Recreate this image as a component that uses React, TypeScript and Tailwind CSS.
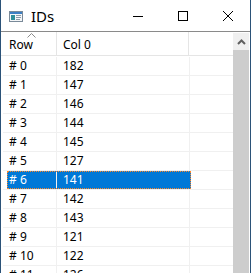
import React from "react";

const rows = [
  { id: 0, value: "182" },
  { id: 1, value: "147" },
  { id: 2, value: "146" },
  { id: 3, value: "144" },
  { id: 4, value: "145" },
  { id: 5, value: "127" },
  { id: 6, value: "141" },
  { id: 7, value: "142" },
  { id: 8, value: "143" },
  { id: 9, value: "121" },
  { id: 10, value: "122" },
  { id: 11, value: "126" },
];

const selected = 6;

function AppIcon() {
  return (
    <svg width="14" height="11" viewBox="0 0 14 11">
      <rect x="0.5" y="0.5" width="13" height="10" fill="#f4f6f8" stroke="#7a8a99" />
      <rect x="1" y="1" width="12" height="2" fill="#3c7fc4" />
      <rect x="2" y="4" width="4" height="5" fill="#2f8f9a" />
      <rect x="7" y="4" width="5" height="1" fill="#8a9aa8" />
      <rect x="7" y="6" width="5" height="1" fill="#8a9aa8" />
      <rect x="7" y="8" width="4" height="1" fill="#8a9aa8" />
    </svg>
  );
}

function TitleBar() {
  return (
    <div className="h-[31px] flex items-center shrink-0">
      <div className="ml-[8px] mt-[1px] flex items-center"><AppIcon /></div>
      <div className="ml-[8px] text-[15px] text-black leading-none mt-[1px]">IDs</div>
      <div className="ml-auto flex h-full">
        <div className="w-[45px] h-full flex items-center justify-center">
          <svg width="10" height="10" viewBox="0 0 10 10"><rect x="0" y="5" width="10" height="1" fill="#000" /></svg>
        </div>
        <div className="w-[45px] h-full flex items-center justify-center">
          <svg width="10" height="10" viewBox="0 0 10 10"><rect x="0.5" y="0.5" width="9" height="9" fill="none" stroke="#000" /></svg>
        </div>
        <div className="w-[45px] h-full flex items-center justify-center">
          <svg width="10" height="10" viewBox="0 0 10 10">
            <path d="M0 0 L10 10 M10 0 L0 10" stroke="#000" strokeWidth="1" />
          </svg>
        </div>
      </div>
    </div>
  );
}

function Header() {
  return (
    <div className="h-[24px] flex border-b border-[#e5e5e5] shrink-0">
      <div className="relative w-[56px] border-r border-[#e5e5e5] pl-[8px] flex items-center pt-[2px]">
        Row
        <svg className="absolute left-[26px] top-[1px]" width="9" height="5" viewBox="0 0 9 5">
          <path d="M0.5 4.5 L4.5 0.5 L8.5 4.5" fill="none" stroke="#8a8a8a" strokeWidth="1" />
        </svg>
      </div>
      <div className="w-[132px] border-r border-[#e5e5e5] pl-[6px] flex items-center pt-[2px]">Col 0</div>
      <div className="flex-1" />
    </div>
  );
}

function Row({ id, value }: { id: number; value: string }) {
  const sel = id === selected;
  return (
    <div className="h-[19px] flex border-b border-[#f0f0f0] ml-[2px] shrink-0">
      <div className="w-[4px]" />
      {sel ? (
        <div className="flex w-[184px] border border-dotted border-[#ff8728] bg-[#0078d7] text-white">
          <div className="w-[49px] pl-[1px] flex items-center border-r border-[#f0f0f0]"># {id}</div>
          <div className="w-[132px] pl-[6px] flex items-center">{value}</div>
        </div>
      ) : (
        <>
          <div className="w-[50px] pl-[2px] flex items-center border-r border-[#f0f0f0]"># {id}</div>
          <div className="w-[133px] pl-[6px] flex items-center border-r border-[#f0f0f0]">{value}</div>
        </>
      )}
      <div className="flex-1" />
    </div>
  );
}

function ScrollBar() {
  return (
    <div className="w-[16px] flex flex-col shrink-0 pt-px">
      <div className="h-[17px] bg-[#f0f0f0] flex items-center justify-center">
        <svg width="9" height="6" viewBox="0 0 9 6">
          <path d="M1 5 L4.5 1.5 L8 5" fill="none" stroke="#606060" strokeWidth="2" />
        </svg>
      </div>
      <div className="flex-1 bg-[#cdcdcd]" />
    </div>
  );
}

export default function App() {
  return (
    <div
      className="w-[251px] h-[273px] overflow-hidden bg-white border-x border-[#2b5278] flex flex-col text-[12px] text-black"
      style={{ fontFamily: '"Noto Sans", "Open Sans", sans-serif' }}
    >
      <TitleBar />
      <div className="h-px bg-[#8a8a8a] shrink-0" />
      <div className="flex flex-1 min-h-0">
        <div className="flex-1 flex flex-col min-w-0 overflow-hidden">
          <Header />
          <div className="pt-px flex flex-col">
            {rows.map((r) => (
              <Row key={r.id} id={r.id} value={r.value} />
            ))}
          </div>
        </div>
        <ScrollBar />
        <div className="w-px" />
      </div>
    </div>
  );
}
